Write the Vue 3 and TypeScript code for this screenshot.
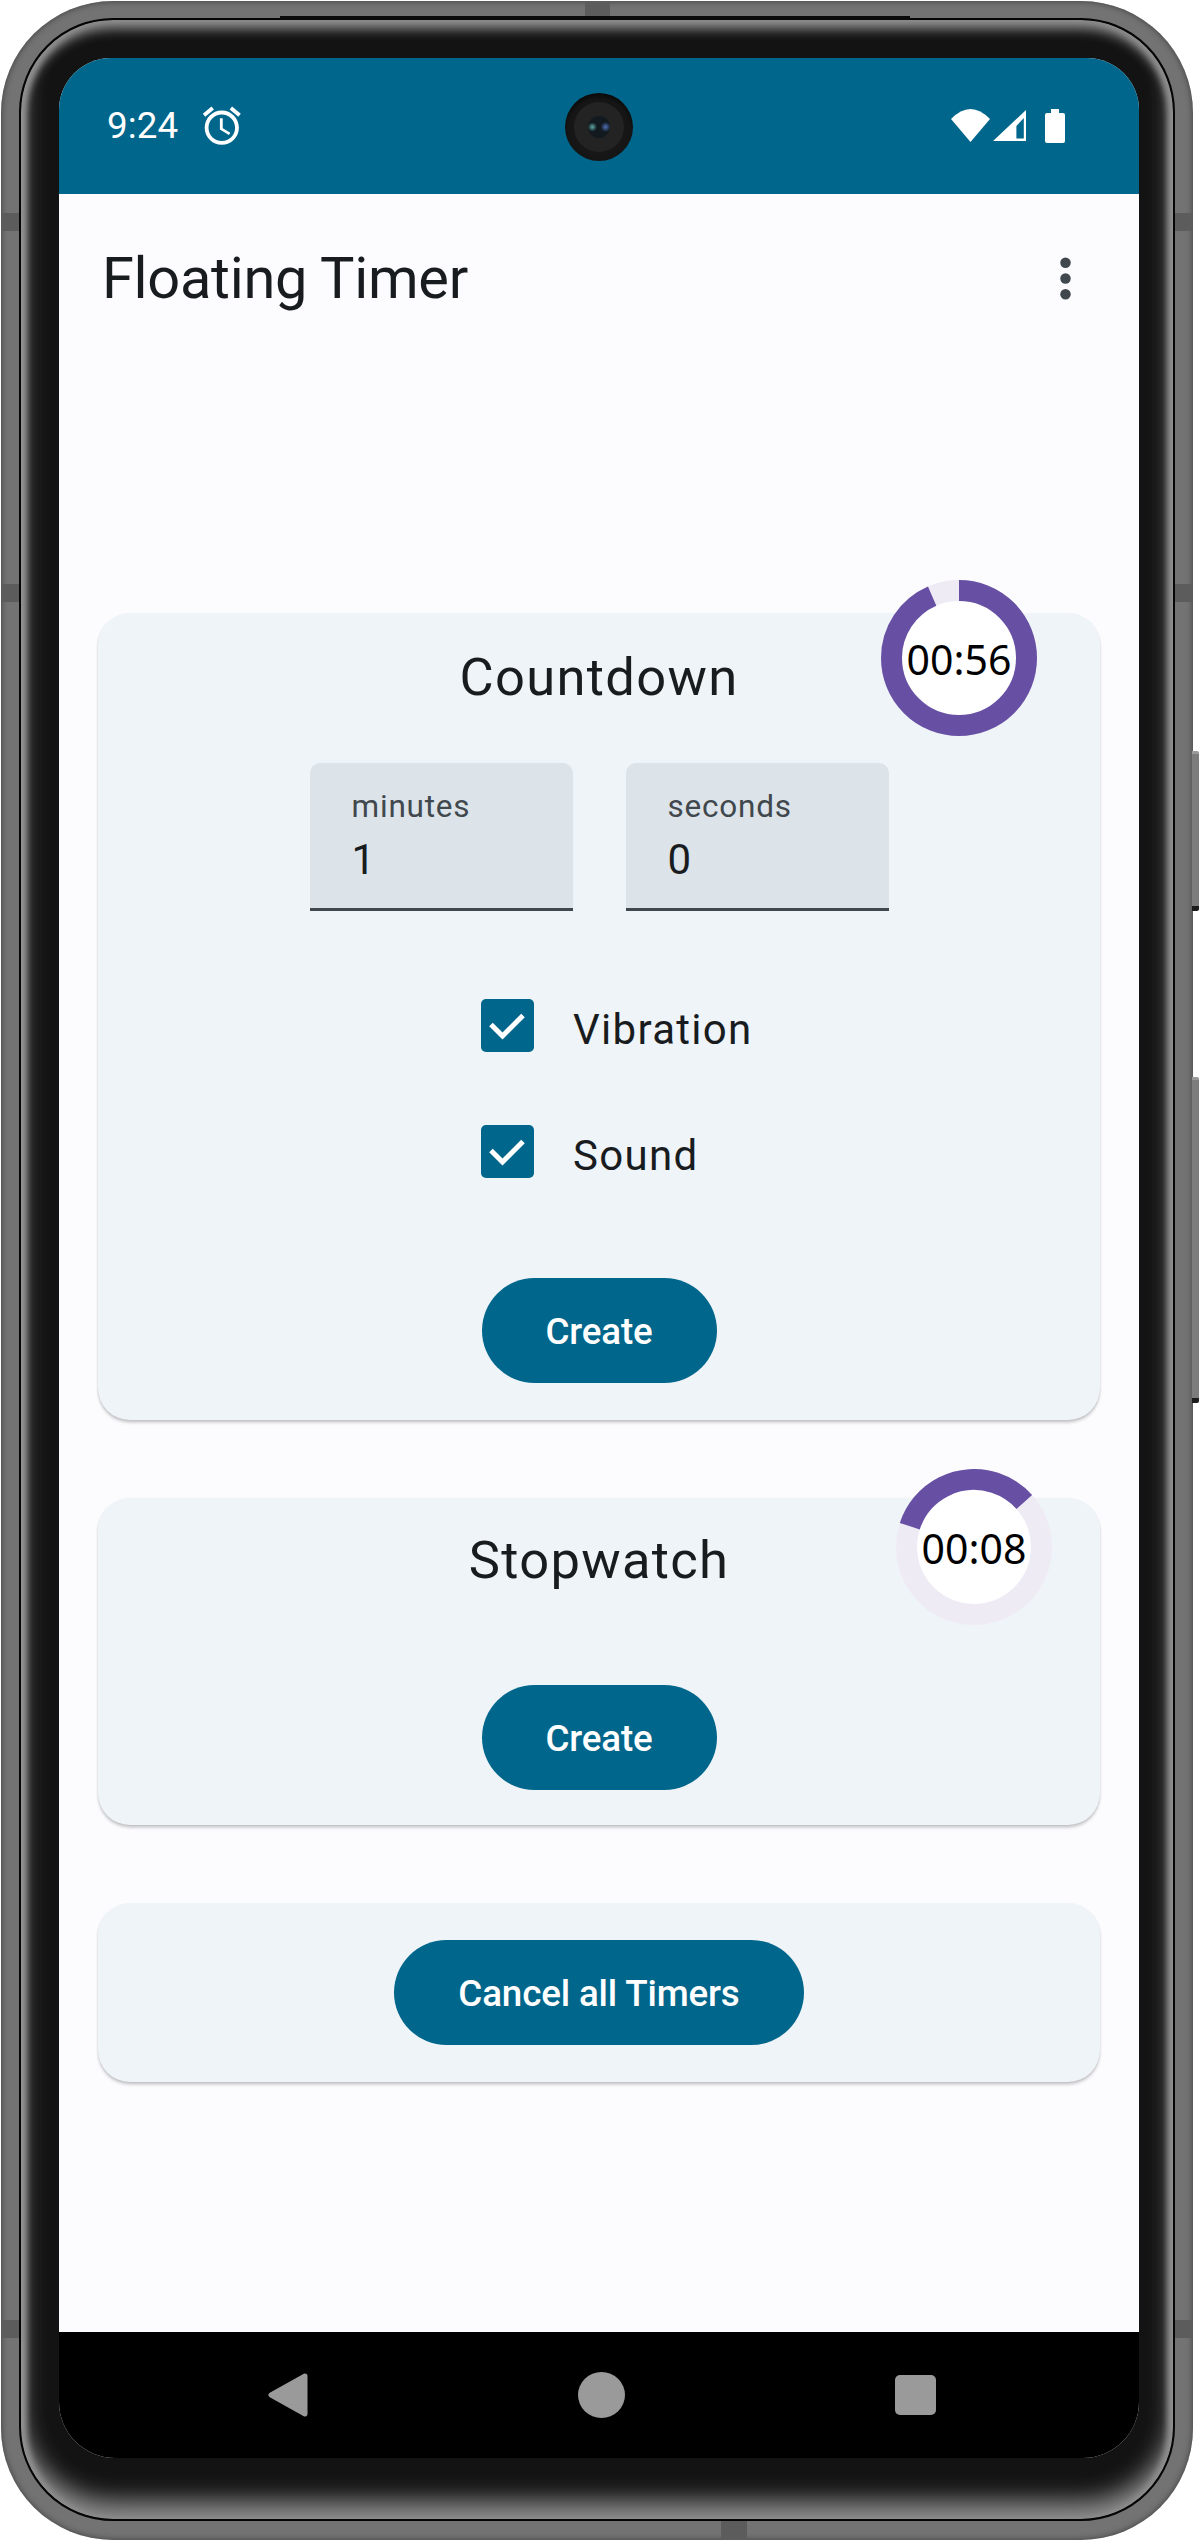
<template>
  <div class="device">
    <span class="band band-left band-a"></span>
    <span class="band band-left band-b"></span>
    <span class="band band-left band-c"></span>
    <span class="band band-right band-a"></span>
    <span class="band band-right band-b"></span>
    <span class="band band-right band-c"></span>
    <span class="band-top"></span>
    <span class="band-bottom"></span>
    <span class="side-key key-one"></span>
    <span class="side-key key-two"></span>
    <span class="notch-line"></span>

    <div class="rim">
      <div class="screen">
        <div class="status-bar">
          <span class="clock">9:24</span>
          <svg class="alarm" viewBox="0 0 24 24" fill="#fff">
            <path d="M22 5.72l-4.6-3.86-1.29 1.53 4.6 3.86L22 5.72zM7.88 3.39L6.6 1.86 2 5.71l1.29 1.53 4.59-3.85zM12.5 8H11v6l4.75 2.85.75-1.23-4-2.37V8zM12 4c-4.97 0-9 4.03-9 9s4.03 9 9 9 9-4.03 9-9-4.03-9-9-9zm0 16c-3.87 0-7-3.13-7-7s3.13-7 7-7 7 3.13 7 7-3.13 7-7 7z" />
          </svg>
          <div class="status-icons">
            <svg class="wifi" viewBox="0 0 39 33" fill="#fff">
              <path d="M19.5 33 0 10Q19.5-10 39 10Z" />
            </svg>
            <svg class="signal" viewBox="0 0 33 31" fill="#fff" fill-rule="evenodd">
              <path d="M33 0V31H0ZM23.4 16 30.8 8V28.5H23.4Z" />
            </svg>
            <svg class="battery" viewBox="0 0 20 34" fill="#fff">
              <path d="M6 0H14V4H6Z" />
              <rect y="4" width="20" height="30" rx="2" />
            </svg>
          </div>
          <span class="camera"><span class="lens"></span></span>
        </div>

        <div class="app-bar">
          <span class="app-title">Floating Timer</span>
          <svg class="more" viewBox="0 0 24 24" fill="#40484d">
            <circle cx="12" cy="6" r="2" />
            <circle cx="12" cy="12" r="2" />
            <circle cx="12" cy="18" r="2" />
          </svg>
        </div>

        <main class="content">
          <section class="card card-countdown">
            <h2 class="card-title">Countdown</h2>
            <div class="fields">
              <div v-for="field in fields" :key="field.label" class="field">
                <span class="field-label">{{ field.label }}</span>
                <span class="field-value">{{ field.value }}</span>
              </div>
            </div>
            <div class="checks">
              <div v-for="option in options" :key="option" class="check-row">
                <span class="check-touch">
                  <svg class="check-box" viewBox="0 0 53 53">
                    <rect width="53" height="53" rx="5" fill="#00668b" />
                    <path d="M10 25.5 21.5 37 42 16.5" fill="none" stroke="#fff" stroke-width="5" />
                  </svg>
                </span>
                <span class="check-label">{{ option }}</span>
              </div>
            </div>
            <button class="action">Create</button>
            <div class="ring ring-countdown">
              <svg viewBox="0 0 156 156">
                <circle cx="78" cy="78" r="57" fill="#fff" />
                <circle cx="78" cy="78" :r="radius" class="ring-track" />
                <circle cx="78" cy="78" :r="radius" class="ring-arc" :stroke-dasharray="dash(336)" />
              </svg>
              <span class="ring-time">00:56</span>
            </div>
          </section>

          <section class="card card-stopwatch">
            <h2 class="card-title">Stopwatch</h2>
            <button class="action">Create</button>
            <div class="ring ring-stopwatch">
              <svg viewBox="0 0 156 156">
                <circle cx="78" cy="78" r="57" fill="#fff" />
                <circle cx="78" cy="78" :r="radius" class="ring-track" />
                <circle cx="78" cy="78" :r="radius" class="ring-arc arc-stopwatch" :stroke-dasharray="dash(120)" />
              </svg>
              <span class="ring-time">00:08</span>
            </div>
          </section>

          <section class="card card-cancel">
            <button class="action action-wide">Cancel all Timers</button>
          </section>
        </main>

        <div class="nav-bar">
          <svg class="nav-back" viewBox="0 0 40 44">
            <path d="M37 3 3 22 37 41Z" fill="#9a9a9a" stroke="#9a9a9a" stroke-width="5" stroke-linejoin="round" />
          </svg>
          <span class="nav-home"></span>
          <span class="nav-recent"></span>
        </div>
      </div>
    </div>
  </div>
</template>

<script setup lang="ts">
const radius = 67.5

const fields = [
  { label: 'minutes', value: '1' },
  { label: 'seconds', value: '0' }
]

const options = ['Vibration', 'Sound']

// arc length for a sweep given in degrees
function dash(sweep: number): string {
  const full = 2 * Math.PI * radius
  return `${(full * sweep) / 360} ${full}`
}
</script>

<style>
html,
body {
  margin: 0;
  background: #fff;
}
</style>

<style scoped>
.device {
  position: relative;
  box-sizing: border-box;
  width: 1192px;
  height: 2539px;
  margin: 1px 0 0 1px;
  padding: 17px 18px 19px;
  border-radius: 112px;
  background: #737373;
  box-shadow: inset 0 0 6px #3c3c3c;
  font-family: Roboto, "Noto Sans", sans-serif;
}

.band {
  position: absolute;
  width: 17px;
  background: #5c5c5c;
}

.band-left {
  left: 1px;
}

.band-right {
  right: 1px;
}

.band-a {
  top: 212px;
  height: 18px;
}

.band-b {
  top: 583px;
  height: 18px;
}

.band-c {
  top: 2319px;
  height: 18px;
}

.band-top {
  position: absolute;
  top: 1px;
  left: 584px;
  width: 25px;
  height: 15px;
  background: #5c5c5c;
}

.band-bottom {
  position: absolute;
  bottom: 0;
  left: 720px;
  width: 26px;
  height: 19px;
  background: #5c5c5c;
}

.side-key {
  position: absolute;
  left: 1191px;
  width: 7px;
  box-sizing: border-box;
  border-radius: 0 2px 2px 0;
  border-top: 3px solid #9a9a9a;
  border-bottom: 5px solid #1c1c1c;
  background: #7c7c7c;
}

.key-one {
  top: 750px;
  height: 160px;
}

.key-two {
  top: 1076px;
  height: 326px;
}

.notch-line {
  position: absolute;
  top: 15px;
  left: 279px;
  width: 630px;
  height: 4px;
  background: #0a0a0a;
}

.rim {
  box-sizing: border-box;
  height: 100%;
  padding: 38px 34px 61px 38px;
  border: 2px solid #050505;
  border-radius: 94px;
  background: #131313;
  box-shadow:
    inset 0 10px 12px -1px #8c8c8c,
    inset 0 -18px 24px 0 #8e8e8e,
    inset 6px 0 6px -1px #a4a4a4,
    inset -6px 0 6px -1px #9c9c9c;
}

.screen {
  display: flex;
  flex-direction: column;
  width: 1080px;
  height: 2400px;
  overflow: hidden;
  border-radius: 52px 52px 56px 56px;
  background: #fcfcff;
}

.status-bar {
  position: relative;
  display: flex;
  flex: none;
  align-items: center;
  height: 136px;
  padding: 0 74px 0 48px;
  background: #00668b;
  color: #fff;
}

.clock {
  font-size: 36.75px;
  line-height: 40px;
  letter-spacing: 0.1px;
}

.alarm {
  width: 45.6px;
  height: 45.6px;
  margin-left: 21px;
}

.status-icons {
  display: flex;
  align-items: flex-start;
  margin-left: auto;
}

.wifi {
  width: 39px;
  height: 33px;
}

.signal {
  width: 33px;
  height: 31px;
  margin: 1px 0 0 3px;
}

.battery {
  width: 20px;
  height: 34px;
  margin-left: 19px;
}

.camera {
  position: absolute;
  top: 35px;
  left: 506px;
  display: flex;
  align-items: center;
  justify-content: center;
  width: 68px;
  height: 68px;
  border-radius: 50%;
  background: radial-gradient(circle at 50% 55%, #1c1c1c 0, #151515 62%, #050505 78%, #000 100%);
}

.lens {
  width: 22px;
  height: 22px;
  border-radius: 50%;
  background:
    radial-gradient(circle at 20% 50%, #5fa8a8 0, rgba(95, 168, 168, 0) 22%),
    radial-gradient(circle at 80% 50%, #4f6fb8 0, rgba(79, 111, 184, 0) 24%),
    #121a20;
  box-shadow: 0 0 0 14px #232323;
}

.app-bar {
  display: flex;
  flex: none;
  align-items: center;
  justify-content: space-between;
  height: 168px;
  padding: 0 42px 0 43px;
}

.app-title {
  color: #191c1e;
  font-size: 57.75px;
  line-height: 74px;
  letter-spacing: -0.3px;
}

.more {
  width: 63px;
  height: 63px;
}

.content {
  display: flex;
  flex: 1;
  flex-direction: column;
  justify-content: center;
  gap: 78px;
  padding: 0 39px;
}

.card {
  position: relative;
  display: flex;
  flex-direction: column;
  align-items: center;
  padding: 37px 0;
  border-radius: 32px;
  background: #eff4f8;
  box-shadow: 0 3px 3px rgba(0, 0, 0, 0.16), 0 1px 2px rgba(0, 0, 0, 0.1);
}

.card-title {
  margin: 0;
  color: #191c1e;
  font-size: 52.5px;
  font-weight: 400;
  line-height: 54px;
  letter-spacing: 1.3px;
}

.fields {
  display: flex;
  gap: 53px;
  margin-top: 59px;
}

.field {
  display: flex;
  flex-direction: column;
  box-sizing: border-box;
  width: 263px;
  height: 148px;
  padding: 24px 42px 0;
  border-bottom: 3px solid #40484d;
  border-radius: 10px 10px 0 0;
  background: #dce3e9;
}

.field-label {
  color: #40484d;
  font-size: 31.5px;
  line-height: 40px;
  letter-spacing: 0.8px;
}

.field-value {
  margin-top: 8px;
  color: #191c1e;
  font-size: 42px;
  line-height: 50px;
  letter-spacing: 1.3px;
}

.checks {
  display: flex;
  flex-direction: column;
  width: 310px;
  margin-top: 52px;
}

.check-row {
  display: flex;
  align-items: center;
  height: 126px;
}

.check-touch {
  display: flex;
  flex: none;
  align-items: center;
  justify-content: center;
  width: 126px;
  height: 126px;
}

.check-box {
  width: 53px;
  height: 53px;
}

.check-label {
  margin-left: 3px;
  padding-top: 8px;
  color: #191c1e;
  font-size: 42px;
  line-height: 60px;
  letter-spacing: 1.3px;
}

.action {
  flex: none;
  width: 235px;
  height: 105px;
  padding: 3px 0 0;
  border: 0;
  border-radius: 53px;
  background: #00668b;
  color: #fff;
  font-family: Roboto, "Noto Sans", sans-serif;
  font-size: 36.75px;
  font-weight: 500;
  letter-spacing: -0.15px;
}

.card-countdown .action {
  margin-top: 63px;
}

.card-stopwatch {
  padding-bottom: 35px;
}

.card-stopwatch .card-title {
  margin-top: -2px;
}

.card-stopwatch .action {
  margin-top: 98px;
}

.action-wide {
  width: 410px;
}

.ring {
  position: absolute;
  display: flex;
  align-items: center;
  justify-content: center;
  width: 156px;
  height: 156px;
}

.ring svg {
  position: absolute;
  inset: 0;
  width: 156px;
  height: 156px;
}

.ring-countdown {
  top: -33px;
  left: 783px;
}

.ring-stopwatch {
  top: -29px;
  left: 798px;
}

.ring-track {
  fill: none;
  stroke: #efebf5;
  stroke-width: 21;
}

.ring-arc {
  fill: none;
  stroke: #6750a4;
  stroke-width: 21;
  transform: rotate(-90deg);
  transform-origin: 78px 78px;
}

.arc-stopwatch {
  transform: rotate(-162deg);
}

.ring-time {
  position: relative;
  margin-top: 2px;
  color: #000;
  font-family: "Noto Sans", sans-serif;
  font-size: 41px;
  line-height: 50px;
}

.nav-bar {
  display: flex;
  flex: none;
  align-items: center;
  gap: 270px;
  height: 126px;
  padding-left: 209px;
  background: #000;
}

.nav-back {
  width: 40px;
  height: 44px;
}

.nav-home {
  width: 47px;
  height: 46px;
  border-radius: 50%;
  background: #9a9a9a;
}

.nav-recent {
  width: 41px;
  height: 40px;
  border-radius: 5px;
  background: #9a9a9a;
}
</style>
